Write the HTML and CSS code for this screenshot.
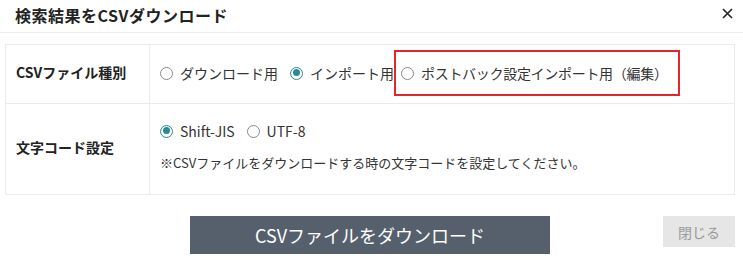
FILE: index.html
```html
<!DOCTYPE html>
<html lang="ja">
<head>
<meta charset="utf-8">
<link rel="stylesheet" href="styles.css">
</head>
<body>
<div class="modal">
  <div class="header">
    <h1 class="title">検索結果をCSVダウンロード</h1>
    <span class="close-x"><svg width="11" height="11" viewBox="0 0 11 11"><path d="M1 1L10 10M10 1L1 10" stroke="#222" stroke-width="1.6" fill="none"/></svg></span>
  </div>
  <table class="form">
    <tr class="row1">
      <th>CSVファイル種別</th>
      <td>
        <div class="opts">
          <label class="opt"><span class="radio"></span>ダウンロード用</label>
          <label class="opt"><span class="radio on"></span>インポート用</label>
          <label class="opt mark"><span class="radio"></span>ポストバック設定インポート用（編集）</label>
        </div>
      </td>
    </tr>
    <tr class="row2">
      <th>文字コード設定</th>
      <td>
        <div class="opts">
          <label class="opt"><span class="radio on"></span>Shift-JIS</label>
          <label class="opt"><span class="radio"></span>UTF-8</label>
        </div>
        <p class="note">※CSVファイルをダウンロードする時の文字コードを設定してください。</p>
      </td>
    </tr>
  </table>
  <div class="actions">
    <span></span>
    <button class="primary">CSVファイルをダウンロード</button>
    <button class="close">閉じる</button>
  </div>
</div>
</body>
</html>
```
FILE: styles.css
```css
* { box-sizing: border-box; }
html, body { margin: 0; padding: 0; background: #fff; }
body {
  font-family: "Noto Sans CJK JP", "Noto Sans", sans-serif;
  color: #333;
  font-size: 14px;
}
.modal { width: 743px; height: 267px; }
.header {
  height: 33px;
  border-bottom: 1px solid #ececec;
  display: flex;
  align-items: center;
  justify-content: space-between;
  padding: 0 10px 2px 15px;
}
.title {
  margin: 0;
  font-size: 16px;
  font-weight: 700;
  color: #222;
  line-height: 20px;
  letter-spacing: 0.5px;
}
.close-x { display: flex; margin-top: -4px; }
.form {
  margin: 11px 8px 0 5px;
  width: 730px;
  border-collapse: collapse;
}
.form th, .form td {
  border: 1px solid #ebebeb;
  vertical-align: middle;
}
.form th {
  width: 144px;
  text-align: left;
  padding: 0 0 4px 10px;
  font-size: 14px;
  font-weight: 700;
  color: #222;
}
.form td { padding: 0 0 0 10px; }
.row1 td { height: 59px; padding-bottom: 2px; }
.row2 td { height: 91px; padding-bottom: 4px; }
.opts { display: flex; align-items: center; }
.opt {
  display: inline-flex;
  align-items: center;
  line-height: 20px;
  font-size: 14px;
  color: #333;
  margin-right: 12px;
}
.opt.mark {
  border: 2px solid #e4262c;
  height: 46px;
  padding: 0 10px 0 5px;
  margin-left: -12px;
  letter-spacing: -0.3px;
}
.radio {
  width: 13px;
  height: 13px;
  border-radius: 50%;
  border: 1px solid #8a8a8a;
  margin-right: 7px;
  position: relative;
  flex: none;
}
.radio.on {
  border: 1.5px solid #2b8a94;
}
.radio.on::after {
  content: "";
  position: absolute;
  left: 1.5px; top: 1.5px;
  width: 7px; height: 7px;
  border-radius: 50%;
  background: #2b8a94;
}
.note {
  margin: 12px 0 0;
  font-size: 13px;
  line-height: 20px;
  color: #333;
}
.actions {
  margin: 21px 8px 0 5px;
  display: grid;
  grid-template-columns: 1fr auto 1fr;
  align-items: start;
}
.primary {
  width: 360px;
  height: 38px;
  border: 0;
  background: #56606d;
  color: #fff;
  font-family: inherit;
  font-size: 18px;
  padding: 0;
}
.close {
  justify-self: end;
  width: 72px;
  height: 31px;
  border: 0;
  background: #e6e6e6;
  color: #9a9a9a;
  font-family: inherit;
  font-size: 14px;
  padding: 0;
}
```
